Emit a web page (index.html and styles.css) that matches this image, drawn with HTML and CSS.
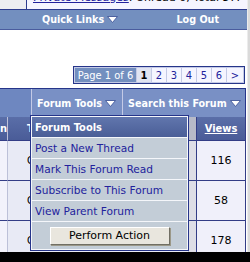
FILE: index.html
```html
<!DOCTYPE html>
<html>
<head>
<meta charset="utf-8">
<link rel="stylesheet" href="styles.css">
</head>
<body>
<div class="screen">
  <div class="main">
    <div class="content">
      <div class="welcome">
        <div class="welcome-side"></div>
        <div class="welcome-cell"><a href="#">Private Messages</a>: Unread 0, Total 57.</div>
      </div>
      <div class="navbar">
        <div class="nav-item nav-quick">Quick Links <svg class="arrow" width="11" height="7" viewBox="0 0 11 7"><polygon points="0.5,0.5 10.5,0.5 5.5,6.5" fill="#fff" stroke="#42579a" stroke-width="0.9"/></svg></div>
        <div class="nav-item nav-logout">Log Out</div>
      </div>
      <div class="pagenav-row">
        <div class="pagenav">
          <span class="pn-label">Page 1 of 6</span>
          <span class="pn-page pn-current">1</span>
          <span class="pn-page">2</span>
          <span class="pn-page">3</span>
          <span class="pn-page">4</span>
          <span class="pn-page">5</span>
          <span class="pn-page">6</span>
          <span class="pn-page pn-next">&gt;</span>
        </div>
      </div>
      <div class="forum">
        <div class="tcat-row">
          <div class="tcat"></div>
          <div class="tool tool-forum">Forum Tools <svg class="arrow" width="11" height="7" viewBox="0 0 11 7"><polygon points="0.5,0.5 10.5,0.5 5.5,6.5" fill="#fff" stroke="#42579a" stroke-width="0.9"/></svg></div>
          <div class="tool tool-search">Search this Forum <svg class="arrow" width="11" height="7" viewBox="0 0 11 7"><polygon points="0.5,0.5 10.5,0.5 5.5,6.5" fill="#fff" stroke="#42579a" stroke-width="0.9"/></svg></div>
        </div>
        <div class="row head">
          <div class="cell c-a">n</div>
          <div class="cell c-b">Thread / Thread Starter</div>
          <div class="cell c-c"></div>
          <div class="cell c-views"><a href="#">Views</a></div>
        </div>
        <div class="row">
          <div class="cell c-a"></div>
          <div class="cell c-b">Corvette parts for sale</div>
          <div class="cell c-c"></div>
          <div class="cell c-views">116</div>
        </div>
        <div class="row">
          <div class="cell c-a"></div>
          <div class="cell c-b">Custom exhaust question</div>
          <div class="cell c-c"></div>
          <div class="cell c-views">58</div>
        </div>
        <div class="row">
          <div class="cell c-a"></div>
          <div class="cell c-b">Club meeting this weekend</div>
          <div class="cell c-c"></div>
          <div class="cell c-views">178</div>
        </div>
      </div>
      <div class="menu">
        <div class="menu-head">Forum Tools</div>
        <div class="menu-opt"><a href="#">Post a New Thread</a></div>
        <div class="menu-opt"><a href="#">Mark This Forum Read</a></div>
        <div class="menu-opt"><a href="#">Subscribe to This Forum</a></div>
        <div class="menu-opt"><a href="#">View Parent Forum</a></div>
        <div class="menu-action"><button class="button" type="button">Perform Action</button></div>
      </div>
    </div>
    <div class="edge"></div>
  </div>
  <div class="footer"></div>
</div>
</body>
</html>
```
FILE: styles.css
```css
* { box-sizing: border-box; }
html, body { margin: 0; padding: 0; }
body {
  width: 250px;
  height: 262px;
  overflow: hidden;
  background: #fff;
  font-family: "DejaVu Sans Condensed", "DejaVu Sans", sans-serif;
  font-stretch: condensed;
}
.screen { display: flex; flex-direction: column; height: 262px; }
.main { display: flex; height: 252px; overflow: hidden; }
.content { width: 247px; position: relative; overflow: hidden; }
.edge { width: 3px; background: #dadada; border-left: 1px solid #ececec; }
.footer { height: 10px; background: #000; }

/* welcome strip (cut off at top) */
.welcome { display: flex; height: 10px; overflow: hidden; border-bottom: 1px solid #2d3b8e; }
.welcome-side { width: 26px; background: #ededf1; }
.welcome-cell {
  flex: 1;
  margin-top: -8px;
  padding-left: 6px;
  border-left: 1px solid #2d3b8e;
  background: #f5f5ff;
  font: 11px/12px "DejaVu Sans", sans-serif;
  white-space: nowrap;
  color: #000;
}
.welcome-cell a { color: #22229c; }

/* navbar */
.navbar {
  display: flex;
  align-items: center;
  height: 20px;
  background: #738fbf;
  border-bottom: 1px solid #4a5c9e;
  color: #fff;
  font-size: 10.7px;
  font-weight: bold;
}
.nav-item { display: flex; align-items: center; gap: 3px; white-space: nowrap; }
.nav-quick { margin-left: 42px; }
.nav-logout { margin-left: auto; margin-right: 28px; }
.arrow { display: block; }

/* page navigation */
.pagenav-row { display: flex; justify-content: flex-end; margin-top: 36px; padding-right: 2px; }
.pagenav {
  display: flex;
  gap: 1px;
  height: 18px;
  padding: 1px;
  border: 1px solid #26358a;
  background: #c4cae6;
  font-size: 11px;
}
.pagenav span { display: flex; align-items: center; justify-content: center; }
.pn-label { width: 61px; background: #738fbf; color: #fff; }
.pn-page { width: 14px; background: #f5f5ff; color: #22229c; }
.pn-current { background: #e1e4f2; color: #000; font-weight: bold; }
.pn-next { width: 16px; }

/* forum table */
.forum { margin-top: 4px; width: 246px; border-top: 1px solid #26358a; }
.tcat-row { display: flex; height: 28px; background: #c4cae6; gap: 1px; }
.tcat { width: 31px; background: #6e87c0; }
.tool {
  display: flex;
  align-items: center;
  gap: 3px;
  background: #7990c5;
  color: #fff;
  font-size: 10.7px;
  font-weight: bold;
  white-space: nowrap;
}
.tool-forum { width: 90px; padding-left: 5px; }
.tool-search { flex: 1; padding-left: 5px; border-right: 1px solid #26358a; }

.row { display: grid; grid-template-columns: 8px 181px 8px 49px; height: 40px; }
.row.head { height: 24px; }
.cell {
  border-right: 1px solid #bcc0d8;
  border-bottom: 1px solid #333d86;
  background: #e8eaf5;
  font-size: 11px;
  white-space: nowrap;
  overflow: hidden;
  display: flex;
  align-items: center;
}
.c-a { background: #f2f2fb; }
.c-b { padding-left: 19px; color: #000; }
.c-c { background: #dedee6; border-right-color: #333d86; }
.c-views {
  justify-content: center;
  background: #f0f0fa;
  border-right-color: #333d86;
  font-family: "DejaVu Sans", sans-serif;
  font-stretch: normal;
  font-size: 11px;
  color: #000;
}
.head .cell {
  background: linear-gradient(#5a6ea8, #4a5c98);
  color: #fff;
  font-weight: bold;
  align-items: flex-start;
  padding-top: 5px;
}
.head .c-a { justify-content: flex-end; }
.head .c-c { background: #b7bac8; }
.head .c-views { font-family: "DejaVu Sans Condensed", "DejaVu Sans", sans-serif; font-stretch: condensed; }
.head .c-views a { color: #fff; }

/* popup menu */
.menu {
  position: absolute;
  left: 30px;
  top: 115px;
  width: 159px;
  height: 136px;
  display: flex;
  flex-direction: column;
  gap: 1px;
  padding: 1px;
  border: 1px solid #26358a;
  background: #f4f6fa;
}
.menu-head {
  height: 20px;
  display: flex;
  align-items: center;
  padding-left: 3px;
  background: linear-gradient(#6176ad, #4a5e97);
  color: #fff;
  font-size: 11px;
  font-weight: bold;
}
.menu-opt {
  height: 20px;
  display: flex;
  align-items: center;
  padding-left: 3px;
  background: #c3cdd7;
  font-family: "DejaVu Sans", sans-serif;
  font-stretch: normal;
  font-size: 10.6px;
  white-space: nowrap;
}
.menu-opt a { color: #22229c; text-decoration: none; }
.menu-action {
  flex: 1;
  display: flex;
  align-items: center;
  justify-content: center;
  background: #c3cdd7;
}
.button {
  width: 120px;
  height: 18px;
  padding: 0;
  font-family: "DejaVu Sans", sans-serif;
  font-size: 11px;
  color: #000;
  background: #e9e6de;
  border: 1px solid;
  border-color: #fff #716f64 #716f64 #fff;
  box-shadow: 1px 1px 0 #9b9888;
}
```
